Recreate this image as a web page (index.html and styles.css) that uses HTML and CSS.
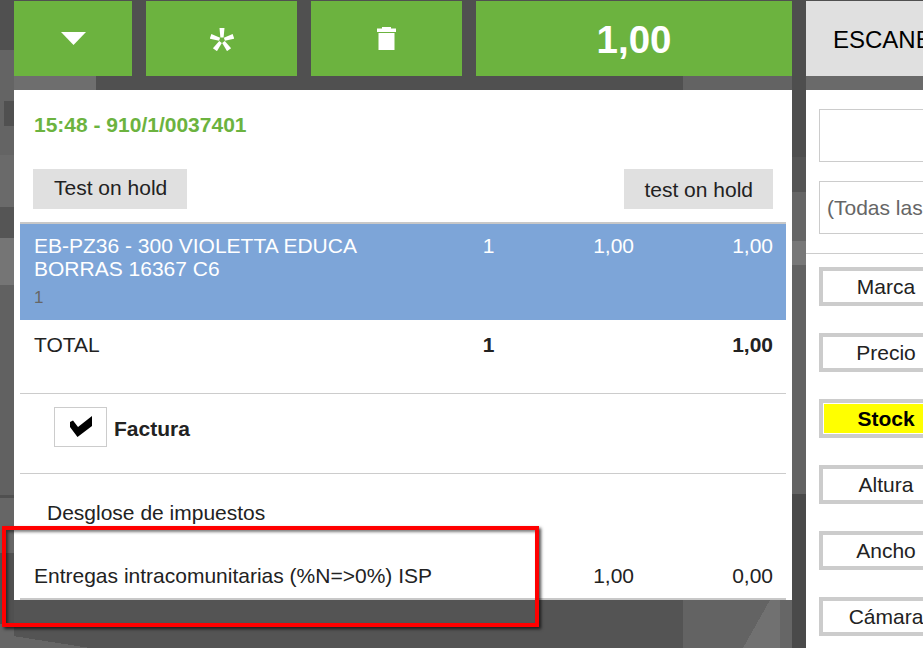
FILE: index.html
```html
<!DOCTYPE html>
<html lang="es">
<head>
  <meta charset="UTF-8">
  <title>Ticket</title>
  <link rel="stylesheet" href="styles.css">
</head>
<body>
  <div class="topbar">
    <button class="action action-small" aria-label="Desplegar">
      <svg width="25" height="13" viewBox="0 0 25 13"><path d="M0 0h25L12.500 13z" fill="#fff"/></svg>
    </button>
    <button class="action action-mid" aria-label="Asterisco">
      <svg width="24" height="24" viewBox="0 0 24 24" fill="#fff">
        <path d="M9.500 0h5L13.600 9.500h-3.200z" transform="translate(0 1)"/>
        <path d="M9.500 0h5L13.600 9.500h-3.200z" transform="translate(0 1) rotate(72 12 12)"/>
        <path d="M9.500 0h5L13.600 9.500h-3.200z" transform="translate(0 1) rotate(144 12 12)"/>
        <path d="M9.500 0h5L13.600 9.500h-3.200z" transform="translate(0 1) rotate(216 12 12)"/>
        <path d="M9.500 0h5L13.600 9.500h-3.200z" transform="translate(0 1) rotate(288 12 12)"/>
      </svg>
    </button>
    <button class="action action-mid" aria-label="Borrar">
      <svg width="19" height="23" viewBox="0 0 19 23"><path d="M0 1.500h5V0h9v1.500h5V5H0zM1.500 6h16v17h-16z" fill="#fff"/></svg>
    </button>
    <button class="action action-total"><span class="total-value">1,00</span></button>
    <button class="scan">ESCANEAR</button>
  </div>

  <div class="content">
    <main class="ticket">
      <div class="ticket-id">15:48 - 910/1/0037401</div>
      <div class="holds">
        <span class="hold">Test on hold</span>
        <span class="hold hold-right">test on hold</span>
      </div>

      <div class="line line-selected">
        <div class="line-name">
          EB-PZ36 - 300 VIOLETTA EDUCA<br>BORRAS 16367 C6
          <div class="line-note">1</div>
        </div>
        <div class="col-qty">1</div>
        <div class="col-price">1,00</div>
        <div class="col-sum">1,00</div>
      </div>

      <div class="line line-total">
        <div class="line-name">TOTAL</div>
        <div class="col-qty"><b>1</b></div>
        <div class="col-price"></div>
        <div class="col-sum"><b>1,00</b></div>
      </div>

      <div class="invoice">
        <span class="checkbox">
          <svg width="22" height="21" viewBox="0 0 22 21"><path d="M0 6l3-1.500L8 11 22 0v10L7.500 21 0 11z" fill="#000"/></svg>
        </span>
        <b class="invoice-label">Factura</b>
      </div>

      <div class="tax-title">Desglose de impuestos</div>
      <div class="line line-tax">
        <div class="line-name">Entregas intracomunitarias (%N=&gt;0%) ISP</div>
        <div class="col-qty"></div>
        <div class="col-price">1,00</div>
        <div class="col-sum">0,00</div>
      </div>
    </main>

    <aside class="filters">
      <div class="field"></div>
      <div class="field field-select">(Todas las categorías)</div>
      <div class="sort-list">
        <div class="sort">Marca</div>
        <div class="sort">Precio</div>
        <div class="sort sort-on">Stock</div>
        <div class="sort">Altura</div>
        <div class="sort">Ancho</div>
        <div class="sort">Cámara</div>
      </div>
    </aside>
  </div>

  <div class="callout"></div>
</body>
</html>
```

FILE: styles.css
```css
* {
  box-sizing: border-box;
}
html, body {
  margin: 0;
  height: 100%;
  overflow: hidden;
}
body {
  position: relative;
  width: 923px;
  height: 648px;
  padding: 1px 0 0 14px;
  font-family: "Liberation Sans", Arial, sans-serif;
  font-size: 21px;
  color: #222;
  /* the blurred photo behind the panels */
  background-color: #505050;
  background-image:
    linear-gradient(#505050, #505050),
    linear-gradient(#505050 50px, #646464 50px 155px, #6a6a6a 155px 207px, #555 207px 238px, #757575 238px 285px, #616161 285px 495px, #505050 495px 498px, #666 498px 553px, #505050 553px 624px, #666 624px),
    linear-gradient(#4e4e4e 157px, #555 157px 192px, #666 192px 241px, #787878 241px 265px, #636363 265px 494px, #4a4a4a 494px),
    linear-gradient(#6e6e6e, #6e6e6e),
    linear-gradient(#636363, #636363),
    linear-gradient(#6a6a6a, #6a6a6a),
    linear-gradient(to bottom right, #636363 50%, #717171 50%),
    linear-gradient(to right, #717171 10px, #666 10px),
    linear-gradient(#636363, #636363),
    linear-gradient(to top right, #666 50%, rgba(102, 102, 102, 0) 50%),
    linear-gradient(#545454, #545454);
  background-repeat: no-repeat;
  background-size:
    10px 25px, 14px 648px, 14px 648px,
    82px 14px, 109px 14px, 117px 14px,
    27px 48px, 22px 48px, 60px 48px,
    90px 14px, 669px 48px;
  background-position:
    4px 101px, 0 0, 792px 0,
    14px 76px, 683px 76px, 806px 76px,
    743px 600px, 770px 600px, 683px 600px,
    0 634px, 14px 600px;
}
.topbar {
  display: flex;
  gap: 14px;
  height: 75px;
}
button {
  flex: none;
  border: none;
  padding: 0;
  font-family: inherit;
  display: flex;
  align-items: center;
  justify-content: center;
}
.action {
  background-color: #6cb33f;
  color: #fff;
}
.action-small { width: 118px; }
.action-mid { width: 151px; }
.action-total {
  width: 316px;
  font-size: 38.500px;
  font-weight: bold;
}
.total-value {
  padding-top: 2px;
}
.scan {
  width: 117px;
  background-color: #e0e0e0;
  color: #000;
  font-size: 24px;
  justify-content: flex-start;
  padding: 3px 0 0 27px;
  white-space: nowrap;
  overflow: hidden;
}
.content {
  display: flex;
  gap: 14px;
  margin-top: 14px;
}
.ticket {
  flex: none;
  width: 778px;
  height: 510px;
  background: #fff;
  padding: 0 6px;
}
.ticket-id {
  padding: 23px 0 0 14px;
  height: 55px;
  line-height: 24px;
  font-weight: bold;
  color: #6cb33f;
}
.holds {
  display: flex;
  justify-content: space-between;
  padding: 24px 13px 13px 13px;
}
.hold {
  background: #e0e0e0;
  height: 40px;
  line-height: 38px;
  padding: 0 20px 0 21px;
}
.hold-right {
  padding: 0 20px;
  line-height: 42px;
}
.line {
  display: flex;
  line-height: 24px;
  padding: 0 13px 0 14px;
}
.line-name { width: 438px; }
.col-qty { width: 33px; text-align: center; }
.col-price { width: 129px; text-align: right; }
.col-sum { flex: 1; text-align: right; }
.line-selected {
  background: #7da5d8;
  color: #fff;
  height: 98px;
  border-top: 2px solid #c8c8c8;
  padding-top: 10px;
}
.line-selected .line-name {
  line-height: 23px;
}
.line-note {
  color: #666;
  font-size: 17px;
  line-height: 20px;
  margin-top: 8px;
}
.line-total {
  height: 74px;
  padding-top: 13px;
  border-bottom: 1px solid #ccc;
}
.invoice {
  display: flex;
  align-items: center;
  gap: 7px;
  height: 80px;
  padding: 0 0 14px 34px;
  border-bottom: 1px solid #ccc;
}
.invoice-label {
  margin-top: 4px;
}
.checkbox {
  width: 53px;
  height: 40px;
  border: 1px solid #ccc;
  display: flex;
  align-items: center;
  justify-content: center;
}
.tax-title {
  padding: 27px 0 0 27px;
  line-height: 24px;
  height: 50px;
}
.line-tax {
  height: 76px;
  padding-top: 40px;
  border-bottom: 2px solid #c8c8c8;
}
.filters {
  flex: none;
  width: 117px;
  height: 558px;
  background: #fff;
  padding-top: 19px;
  overflow: hidden;
}
.field {
  margin-left: 13px;
  width: 187px;
  height: 53px;
  border: 1px solid #ccc;
  margin-bottom: 19px;
  color: #666;
  line-height: 52px;
  padding-left: 7px;
  white-space: nowrap;
  overflow: hidden;
}
.sort-list {
  border-top: 1px solid #ccc;
  padding: 13px 0 0 13px;
}
.sort {
  width: 134px;
  height: 39px;
  border: 4px solid #ccc;
  margin-bottom: 27px;
  text-align: center;
  line-height: 32px;
}
.sort-on {
  background: #ff0;
  outline: 1px solid #fff;
  outline-offset: -5px;
  font-weight: bold;
  color: #000;
}
.callout {
  position: absolute;
  left: 2px;
  top: 526px;
  width: 537px;
  height: 101px;
  border: 4px solid #f00;
  box-shadow: 2px 2px 3px rgba(0, 0, 0, .7), inset 2px 2px 3px rgba(0, 0, 0, .5);
}
```
